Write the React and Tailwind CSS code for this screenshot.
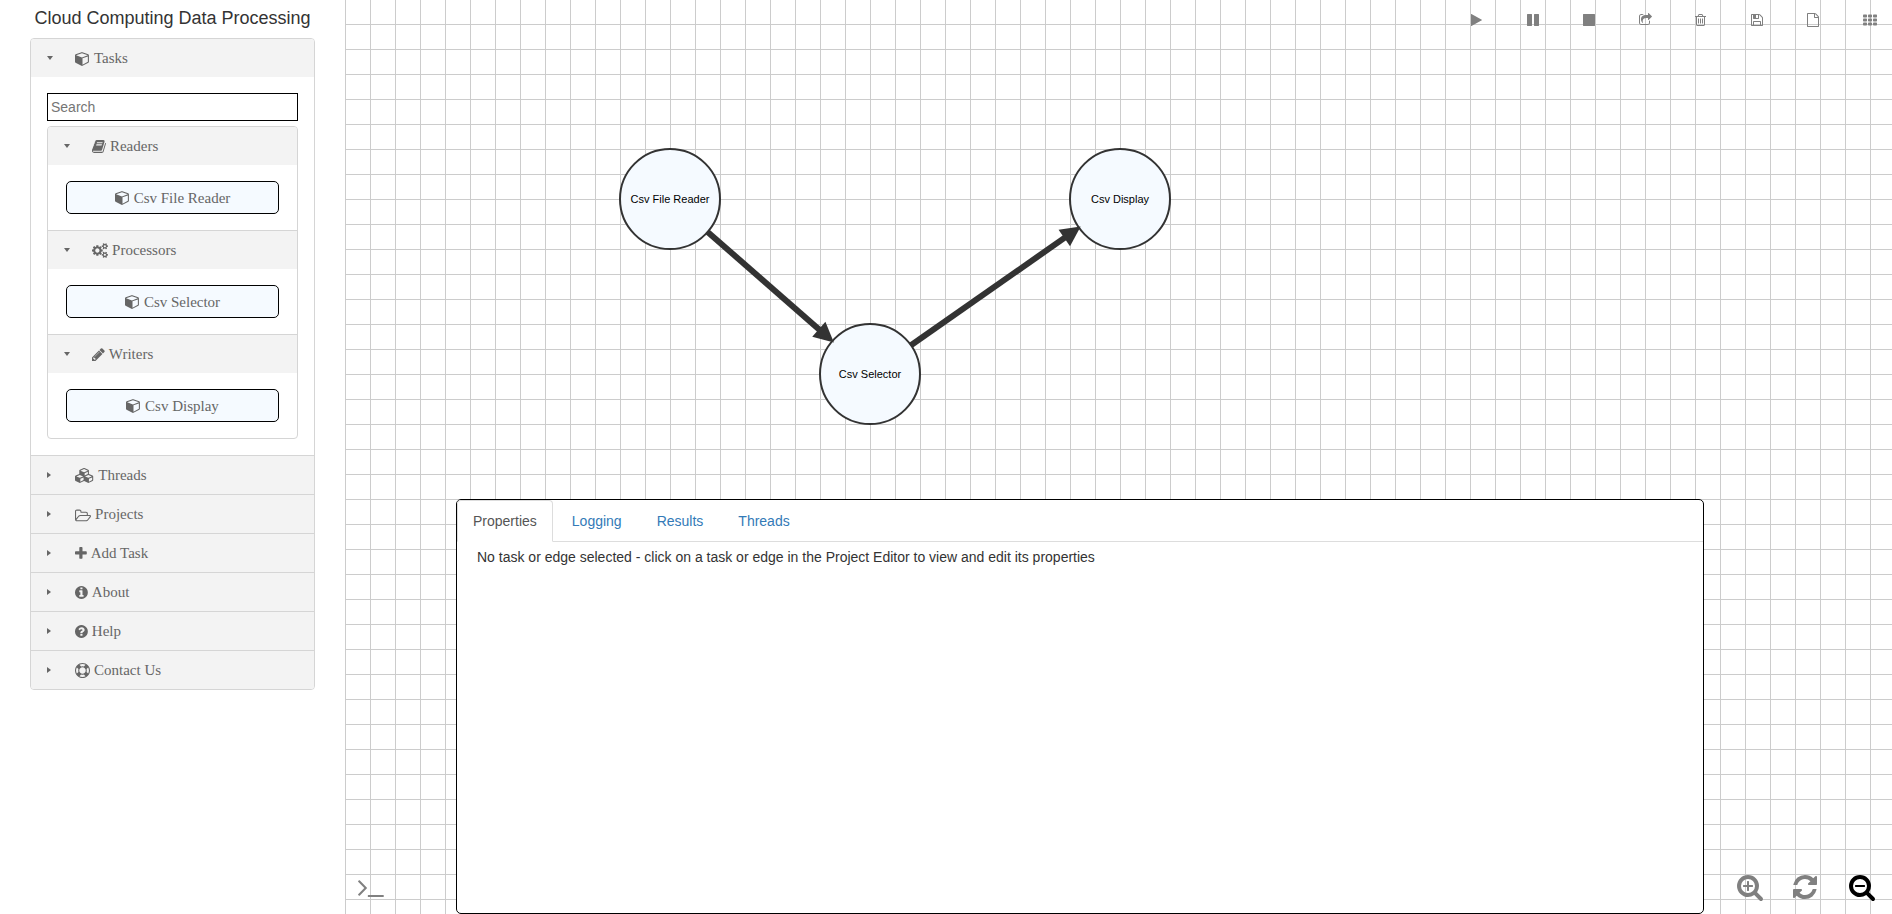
import { useState } from "react";

// Each glyph: [viewBox, path]
const GLYPHS = {
  cube: ["0 0 1792 1792", "M896 1629l640-349v-636l-640 233v752zm-64-865l698-254-698-254-698 254zm832-252v768q0 35-18 65t-49 47l-704 384q-28 16-61 16t-61-16l-704-384q-31-17-49-47t-18-65v-768q0-40 23-73t61-47l704-256q22-8 44-8t44 8l704 256q38 14 61 47t23 73z"],
  book: ["0 0 1664 1792", "M1639 478q40 57 18 129l-275 906q-19 64-76.5 107.5t-122.5 43.5h-923q-77 0-148.5-53.5t-99.5-131.5q-24-67-2-127 0-4 3-27t4-37q1-8-3-21.5t-3-19.5q2-11 8-21t16.5-23.5 16.5-23.5q23-38 45-91.5t30-91.5q3-10 .5-30t-.5-28q3-11 17-28t17-23q21-36 42-92t25-90q1-9-2.5-32t.5-28q4-13 22-30.5t22-22.5q19-26 42.5-84.5t27.5-96.5q1-8-3-25.5t-2-26.5q2-8 9-18t18-23 17-21q8-12 16.5-30.5t15-35 16-36 19.5-32 26.5-23.5 36-11.5 47.5 5.5l-1 3q38-9 51-9h761q74 0 114 56t18 130l-274 906q-36 119-71.5 153.5t-128.5 34.5h-869q-27 0-38 15-11 16-1 43 24 70 144 70h923q29 0 56-15.5t35-41.5l300-987q7-22 5-57 38 15 59 43zm-1064 2q-4 13 2 22.5t20 9.5h608q13 0 25.5-9.5t16.5-22.5l21-64q4-13-2-22.5t-20-9.5h-608q-13 0-25.5 9.5t-16.5 22.5zm-83 256q-4 13 2 22.5t20 9.5h608q13 0 25.5-9.5t16.5-22.5l21-64q4-13-2-22.5t-20-9.5h-608q-13 0-25.5 9.5t-16.5 22.5z"],
  cogs: ["-64 0 1920 1792", "M832 896q0-106-75-181t-181-75-181 75-75 181 75 181 181 75 181-75 75-181zm768 512q0-52-38-90t-90-38-90 38-38 90q0 53 37.5 90.5t90.5 37.5 90.5-37.5 37.5-90.5zm0-1024q0-52-38-90t-90-38-90 38-38 90q0 53 37.5 90.5t90.5 37.5 90.5-37.5 37.5-90.5zm-384 421v185q0 10-7 19.5t-16 10.5l-155 24q-11 35-32 76 34 48 90 115 7 11 7 20 0 12-7 19-23 30-82.5 89.5t-78.5 59.5q-11 0-21-7l-115-90q-37 19-77 31-11 108-23 155-7 24-30 24h-186q-11 0-20-7.5t-10-17.5l-23-153q-34-10-75-31l-118 89q-7 7-20 7-11 0-21-8-144-133-144-160 0-9 7-19 10-14 41-53t47-61q-23-44-35-82l-152-24q-10-1-17-9.5t-7-19.5v-185q0-10 7-19.5t16-10.5l155-24q11-35 32-76-34-48-90-115-7-11-7-20 0-12 7-20 22-30 82-89t79-59q11 0 21 7l115 90q34-18 77-32 11-108 23-154 7-24 30-24h186q11 0 20 7.5t10 17.5l23 153q34 10 75 31l118-89q8-7 20-7 11 0 21 8 144 133 144 160 0 8-7 19-12 16-42 54t-45 60q23 48 34 82l152 23q10 2 17 10.5t7 19.5zm640 533v140q0 16-149 31-12 27-30 52 51 113 51 138 0 4-4 7-122 71-124 71-8 0-46-47t-52-68q-20 2-30 2t-30-2q-14 21-52 68t-46 47q-2 0-124-71-4-3-4-7 0-25 51-138-18-25-30-52-149-15-149-31v-140q0-16 149-31 13-29 30-52-51-113-51-138 0-4 4-7 4-2 35-20t59-34 30-16q8 0 46 46.5t52 67.5q20-2 30-2t30 2q51-71 92-112l6-2q4 0 124 70 4 3 4 7 0 25-51 138 17 23 30 52 149 15 149 31zm0-1024v140q0 16-149 31-12 27-30 52 51 113 51 138 0 4-4 7-122 71-124 71-8 0-46-47t-52-68q-20 2-30 2t-30-2q-14 21-52 68t-46 47q-2 0-124-71-4-3-4-7 0-25 51-138-18-25-30-52-149-15-149-31v-140q0-16 149-31 13-29 30-52-51-113-51-138 0-4 4-7 4-2 35-20t59-34 30-16q8 0 46 46.5t52 67.5q20-2 30-2t30 2q51-71 92-112l6-2q4 0 124 70 4 3 4 7 0 25-51 138 17 23 30 52 149 15 149 31z"],
  pencil: ["128 0 1536 1792", "M491 1536l91-91-235-235-91 91v107h128v128h107zm523-928q0-22-22-22-10 0-17 7l-542 542q-7 7-7 17 0 22 22 22 10 0 17-7l542-542q7-7 7-17zm-54-192l416 416-832 832h-416v-416zm683 96q0 53-37 90l-166 166-416-416 166-165q36-38 90-38 53 0 91 38l235 234q37 39 37 91z"],
  cubes: ["-256 0 2304 1792", "M384 1629l384-192v-314l-384 164v342zm-64-454l404-173-404-173-404 173zm1088 454l384-192v-314l-384 164v342zm-64-454l404-173-404-173-404 173zm-448-293l384-165v-266l-384 164v267zm-64-379l441-189-441-189-441 189zm1088 518v416q0 36-19 67t-52 47l-448 224q-25 14-57 14t-57-14l-448-224q-5-2-7-4-2 2-7 4l-448 224q-25 14-57 14t-57-14l-448-224q-33-16-52-47t-19-67v-416q0-38 21.5-70t56.5-48l434-186v-400q0-38 21.5-70t56.5-48l448-192q23-10 50-10t50 10l448 192q35 16 56.5 48t21.5 70v400l434 186q36 16 57 48t21 70z"],
  folder: ["0 0 1920 1792", "M1781 1109q0-35-53-35h-1088q-40 0-85.5 21.5t-71.5 52.5l-294 363q-18 24-18 40 0 35 53 35h1088q40 0 86-22t71-53l294-363q18-22 18-39zm-1141-163h768v-160q0-40-28-68t-68-28h-576q-40 0-68-28t-28-68v-64q0-40-28-68t-68-28h-320q-40 0-68 28t-28 68v853l256-315q44-53 116-87.5t140-34.5zm1269 163q0 62-46 120l-295 363q-43 53-116 87.5t-140 34.5h-1088q-92 0-158-66t-66-158v-960q0-92 66-158t158-66h320q92 0 158 66t66 158v32h544q92 0 158 66t66 158v160h192q54 0 99 24.5t67 70.5q15 32 15 68z"],
  plus: ["192 0 1408 1792", "M1600 736v192q0 40-28 68t-68 28h-416v416q0 40-28 68t-68 28h-192q-40 0-68-28t-28-68v-416h-416q-40 0-68-28t-28-68v-192q0-40 28-68t68-28h416v-416q0-40 28-68t68-28h192q40 0 68 28t28 68v416h416q40 0 68 28t28 68z"],
  info: ["128 0 1536 1792", "M1152 1376v-160q0-14-9-23t-23-9h-96v-512q0-14-9-23t-23-9h-320q-14 0-23 9t-9 23v160q0 14 9 23t23 9h96v320h-96q-14 0-23 9t-9 23v160q0 14 9 23t23 9h448q14 0 23-9t9-23zm-128-896v-160q0-14-9-23t-23-9h-192q-14 0-23 9t-9 23v160q0 14 9 23t23 9h192q14 0 23-9t9-23zm640 416q0 209-103 385.5t-279.5 279.5-385.5 103-385.5-103-279.5-279.5-103-385.5 103-385.5 279.5-279.5 385.5-103 385.5 103 279.5 279.5 103 385.5z"],
  question: ["128 0 1536 1792", "M1024 1376v-192q0-14-9-23t-23-9h-192q-14 0-23 9t-9 23v192q0 14 9 23t23 9h192q14 0 23-9t9-23zm256-672q0-88-55.5-163t-138.5-116-170-41q-243 0-371 213-15 24 8 42l132 100q7 6 19 6 16 0 25-12 53-68 86-92 34-24 86-24 48 0 85.5 26t37.5 59q0 38-20 61t-68 45q-63 28-115.5 86.5t-52.5 125.5v36q0 14 9 23t23 9h192q14 0 23-9t9-23q0-19 21.5-49.5t54.5-49.5q32-18 49-28.5t46-35 44.5-48 28-60.5 12.5-81zm384 192q0 209-103 385.5t-279.5 279.5-385.5 103-385.5-103-279.5-279.5-103-385.5 103-385.5 279.5-279.5 385.5-103 385.5 103 279.5 279.5 103 385.5z"],
  ring: ["0 0 1792 1792", "M896 0q182 0 348 71t286 191 191 286 71 348-71 348-191 286-286 191-348 71-348-71-286-191-191-286-71-348 71-348 191-286 286-191 348-71zm0 128q-190 0-361 90l194 194q82-28 167-28t167 28l194-194q-171-90-361-90zm-678 1129l194-194q-28-82-28-167t28-167l-194-194q-90 171-90 361t90 361zm678 407q190 0 361-90l-194-194q-82 28-167 28t-167-28l-194 194q171 90 361 90zm0-384q159 0 271.5-112.5t112.5-271.5-112.5-271.5-271.5-112.5-271.5 112.5-112.5 271.5 112.5 271.5 271.5 112.5zm484-217l194 194q90-171 90-361t-90-361l-194 194q28 82 28 167t-28 167z"],
  play: ["192 0 1408 1792", "M1576 927l-1328 738q-23 13-39.5 3t-16.5-36v-1472q0-26 16.5-36t39.5 3l1328 738q23 13 23 31t-23 31z"],
  pause: ["128 0 1536 1792", "M1664 192v1408q0 26-19 45t-45 19h-512q-26 0-45-19t-19-45v-1408q0-26 19-45t45-19h512q26 0 45 19t19 45zm-896 0v1408q0 26-19 45t-45 19h-512q-26 0-45-19t-19-45v-1408q0-26 19-45t45-19h512q26 0 45 19t19 45z"],
  stop: ["128 0 1536 1792", "M1664 192v1408q0 26-19 45t-45 19h-1408q-26 0-45-19t-19-45v-1408q0-26 19-45t45-19h1408q26 0 45 19t19 45z"],
  share: ["64 0 1664 1792", "M1472 989v259q0 119-84.5 203.5t-203.5 84.5h-832q-119 0-203.5-84.5t-84.5-203.5v-832q0-119 84.5-203.5t203.5-84.5h255q13 0 22.5 9.5t9.5 22.5q0 27-26 32-77 26-133 60-10 4-16 4h-112q-66 0-113 47t-47 113v832q0 66 47 113t113 47h832q66 0 113-47t47-113v-214q0-19 18-29 28-13 54-37 16-16 35-8 21 9 21 29zm237-496l-384 384q-18 19-45 19-12 0-25-5-39-17-39-59v-192h-160q-323 0-438 131-119 137-74 473 3 23-20 34-8 2-12 2-16 0-26-13-10-14-21-31t-39.5-68.5-49.5-99.5-38.5-114-17.5-122q0-49 3.5-91t14-90 28-88 47-81.5 68.5-74 94.5-61.5 124.5-48.5 159.5-30.5 196.5-11h160v-192q0-42 39-59 13-5 25-5 26 0 45 19l384 384q19 19 19 45t-19 45z"],
  trash: ["192 0 1408 1792", "M704 736v576q0 14-9 23t-23 9h-64q-14 0-23-9t-9-23v-576q0-14 9-23t23-9h64q14 0 23 9t9 23zm256 0v576q0 14-9 23t-23 9h-64q-14 0-23-9t-9-23v-576q0-14 9-23t23-9h64q14 0 23 9t9 23zm256 0v576q0 14-9 23t-23 9h-64q-14 0-23-9t-9-23v-576q0-14 9-23t23-9h64q14 0 23 9t9 23zm128 724v-948h-896v948q0 22 7 40.5t14.5 27 10.5 8.5h832q3 0 10.5-8.5t14.5-27 7-40.5zm-672-1076h448l-48-117q-7-9-17-11h-317q-10 2-17 11zm928 32v64q0 14-9 23t-23 9h-96v948q0 83-47 143.5t-113 60.5h-832q-66 0-113-58.5t-47-141.5v-952h-96q-14 0-23-9t-9-23v-64q0-14 9-23t23-9h309l70-167q15-37 54-63t79-26h320q40 0 79 26t54 63l70 167h309q14 0 23 9t9 23z"],
  save: ["128 0 1536 1792", "M512 1536h768v-384h-768v384zm896 0h128v-896q0-14-10-38.5t-20-34.5l-281-281q-10-10-34-20t-39-10v416q0 40-28 68t-68 28h-576q-40 0-68-28t-28-68v-416h-128v1280h128v-416q0-40 28-68t68-28h832q40 0 68 28t28 68v416zm-384-928v-320q0-13-9.5-22.5t-22.5-9.5h-192q-13 0-22.5 9.5t-9.5 22.5v320q0 13 9.5 22.5t22.5 9.5h192q13 0 22.5-9.5t9.5-22.5zm640 32v928q0 40-28 68t-68 28h-1344q-40 0-68-28t-28-68v-1344q0-40 28-68t68-28h928q40 0 88 20t76 48l280 280q28 28 48 76t20 88z"],
  file: ["128 0 1536 1792", "M1596 380q28 28 48 76t20 88v1152q0 40-28 68t-68 28h-1344q-40 0-68-28t-28-68v-1600q0-40 28-68t68-28h896q40 0 88 20t76 48zm-444-244v376h376q-10-29-22-41l-313-313q-12-12-41-22zm384 1528v-1024h-416q-40 0-68-28t-28-68v-416h-768v1536h1280z"],
  zoomIn: ["64 0 1664 1792", "M1088 800v64q0 13-9.5 22.5t-22.5 9.5h-224v224q0 13-9.5 22.5t-22.5 9.5h-64q-13 0-22.5-9.5t-9.5-22.5v-224h-224q-13 0-22.5-9.5t-9.5-22.5v-64q0-13 9.5-22.5t22.5-9.5h224v-224q0-13 9.5-22.5t22.5-9.5h64q13 0 22.5 9.5t9.5 22.5v224h224q13 0 22.5 9.5t9.5 22.5zm128 32q0-185-131.5-316.5t-316.5-131.5-316.5 131.5-131.5 316.5 131.5 316.5 316.5 131.5 316.5-131.5 131.5-316.5zm512 832q0 53-37.5 90.5t-90.5 37.5q-54 0-90-38l-343-342q-179 124-399 124-143 0-273.5-55.5t-225-150-150-225-55.5-273.5 55.5-273.5 150-225 225-150 273.5-55.5 273.5 55.5 225 150 150 225 55.5 273.5q0 220-124 399l343 343q37 37 37 90z"],
  zoomOut: ["64 0 1664 1792", "M1088 800v64q0 13-9.5 22.5t-22.5 9.5h-576q-13 0-22.5-9.5t-9.5-22.5v-64q0-13 9.5-22.5t22.5-9.5h576q13 0 22.5 9.5t9.5 22.5zm128 32q0-185-131.5-316.5t-316.5-131.5-316.5 131.5-131.5 316.5 131.5 316.5 316.5 131.5 316.5-131.5 131.5-316.5zm512 832q0 53-37.5 90.5t-90.5 37.5q-54 0-90-38l-343-342q-179 124-399 124-143 0-273.5-55.5t-225-150-150-225-55.5-273.5 55.5-273.5 150-225 225-150 273.5-55.5 273.5 55.5 225 150 150 225 55.5 273.5q0 220-124 399l343 343q37 37 37 90z"],
  refresh: ["128 0 1536 1792", "M1639 1056q0 5-1 7-64 268-268 434.5t-478 166.5q-146 0-282.5-55t-243.5-157l-129 129q-19 19-45 19t-45-19-19-45v-448q0-26 19-45t45-19h448q26 0 45 19t19 45-19 45l-137 137q71 66 161 102t187 36q134 0 250-65t186-179q11-17 53-117 8-23 30-23h192q13 0 22.5 9.5t9.5 22.5zm25-800v448q0 26-19 45t-45 19h-448q-26 0-45-19t-19-45 19-45l138-138q-148-137-349-137-134 0-250 65t-186 179q-11 17-53 117-8 23-30 23h-199q-13 0-22.5-9.5t-9.5-22.5v-7q65-268 270-434.5t480-166.5q146 0 284 55.5t245 156.5l130-129q19-19 45-19t45 19 19 45z"],
  terminal: ["77 0 1651 1792", "M649 983l-466 466q-10 10-23 10t-23-10l-50-50q-10-10-10-23t10-23l393-393-393-393q-10-10-10-23t10-23l50-50q10-10 23-10t23 10l466 466q10 10 10 23t-10 23zm1079 457v64q0 14-9 23t-23 9h-960q-14 0-23-9t-9-23v-64q0-14 9-23t23-9h960q14 0 23 9t9 23z"],
};

const CELLS = [0, 640, 1280];
const CELL_ROWS = [192, 704, 1216];

function Icon({ name, className }) {
  if (name === "grid") {
    return (
      <svg viewBox="0 0 1792 1792" className={className} fill="currentColor" aria-hidden="true">
        {CELL_ROWS.map((y) => CELLS.map((x) => (
          <rect key={`${x}-${y}`} x={x} y={y} width="512" height="384" rx="96" />
        )))}
      </svg>
    );
  }
  const [viewBox, d] = GLYPHS[name];
  return (
    <svg viewBox={viewBox} className={className} fill="currentColor" aria-hidden="true">
      <path d={d} />
    </svg>
  );
}

function SectionHeader({ icon, label, open, onClick }) {
  return (
    <button
      type="button"
      aria-expanded={open}
      onClick={onClick}
      className="flex h-[38px] w-full cursor-pointer items-center bg-[#f3f3f3] pl-4 text-left"
    >
      <span className="flex w-7 shrink-0">
        {open ? (
          <svg viewBox="0 0 6 4" className="h-1 w-1.5" fill="currentColor" aria-hidden="true"><path d="M0 0h6L3 4z" /></svg>
        ) : (
          <svg viewBox="0 0 4 6" className="h-1.5 w-1" fill="currentColor" aria-hidden="true"><path d="M0 0v6l4-3z" /></svg>
        )}
      </span>
      <Icon name={icon} className="h-[15px] w-auto shrink-0" />
      <span className="ml-1">{label}</span>
    </button>
  );
}

const GROUPS = [
  { icon: "book", label: "Readers", tasks: ["Csv File Reader"] },
  { icon: "cogs", label: "Processors", tasks: ["Csv Selector"] },
  { icon: "pencil", label: "Writers", tasks: ["Csv Display"] },
];

const SECTIONS = [
  { icon: "cubes", label: "Threads" },
  { icon: "folder", label: "Projects" },
  { icon: "plus", label: "Add Task" },
  { icon: "info", label: "About" },
  { icon: "question", label: "Help" },
  { icon: "ring", label: "Contact Us" },
];

function Sidebar() {
  const [query, setQuery] = useState("");
  const [tasksOpen, setTasksOpen] = useState(true);
  const [closed, setClosed] = useState([]);
  const toggle = (label) =>
    setClosed((c) => (c.includes(label) ? c.filter((l) => l !== label) : [...c, label]));

  return (
    <aside className="w-[345px] shrink-0 px-[30px]">
      <h1 className="flex h-[38px] items-center justify-center pb-0.5 whitespace-nowrap text-lg text-[#333]">
        Cloud Computing Data Processing
      </h1>
      <div className="overflow-hidden rounded border border-[#d5d5d5] font-['Liberation_Serif',serif] text-[15px] leading-5 text-[#666]">
        <SectionHeader icon="cube" label="Tasks" open={tasksOpen} onClick={() => setTasksOpen(!tasksOpen)} />
        {tasksOpen && (
          <div className="p-4">
            <input
              type="text"
              aria-label="Search tasks"
              placeholder="Search"
              value={query}
              onChange={(e) => setQuery(e.target.value)}
              className="mb-[5px] block h-7 w-full border border-black bg-white px-[3px] font-['Liberation_Sans',sans-serif] text-sm placeholder:text-[#757575]"
            />
            <div className="divide-y divide-[#d5d5d5] overflow-hidden rounded border border-[#d5d5d5]">
              {GROUPS.map((g) => (
                <section key={g.label}>
                  <SectionHeader icon={g.icon} label={g.label} open={!closed.includes(g.label)} onClick={() => toggle(g.label)} />
                  {!closed.includes(g.label) && (
                    <div className="px-[18px] py-4">
                      {g.tasks
                        .filter((t) => t.toLowerCase().includes(query.toLowerCase()))
                        .map((t) => (
                          <button key={t} type="button" className="flex h-[33px] w-full cursor-pointer items-center justify-center gap-1 rounded-[5px] border border-black bg-[#f5faff]">
                            <Icon name="cube" className="h-[15px] w-auto" />
                            {t}
                          </button>
                        ))}
                    </div>
                  )}
                </section>
              ))}
            </div>
          </div>
        )}
        {SECTIONS.map((s) => (
          <div key={s.label} className="border-t border-[#d5d5d5]">
            <SectionHeader icon={s.icon} label={s.label} open={false} />
          </div>
        ))}
      </div>
    </aside>
  );
}

const NODES = [
  { id: "reader", label: "Csv File Reader", x: 325, y: 199 },
  { id: "selector", label: "Csv Selector", x: 525, y: 374 },
  { id: "display", label: "Csv Display", x: 775, y: 199 },
];
const EDGES = [["reader", "selector"], ["selector", "display"]];
const RADIUS = 50;

function Edge({ from, to }) {
  const length = Math.hypot(to.x - from.x, to.y - from.y);
  const angle = (Math.atan2(to.y - from.y, to.x - from.x) * 180) / Math.PI;
  const tip = length - RADIUS + 2;
  return (
    <g transform={`translate(${from.x} ${from.y}) rotate(${angle})`} fill="#333">
      <rect x={RADIUS} y="-3" width={tip - RADIUS - 12} height="6" />
      <path d={`M${tip} 0l-20 -10v20z`} />
    </g>
  );
}

function Diagram() {
  const byId = Object.fromEntries(NODES.map((n) => [n.id, n]));
  return (
    <svg className="absolute inset-0 h-full w-full" role="img" aria-label="Project graph">
      {NODES.map((n) => (
        <g key={n.id}>
          <circle cx={n.x} cy={n.y} r={RADIUS} fill="#f5faff" stroke="#333" strokeWidth="2" />
          <text x={n.x} y={n.y + 4} textAnchor="middle" className="text-[11px]">{n.label}</text>
        </g>
      ))}
      {EDGES.map(([a, b]) => <Edge key={a + b} from={byId[a]} to={byId[b]} />)}
    </svg>
  );
}

const TOOLS = [
  ["play", "Run"],
  ["pause", "Pause"],
  ["stop", "Stop"],
  ["share", "Share"],
  ["trash", "Delete"],
  ["save", "Save"],
  ["file", "New project"],
  ["grid", "Toggle grid"],
];

const TABS = ["Properties", "Logging", "Results", "Threads"];

function PropertiesPanel() {
  const [active, setActive] = useState("Properties");
  return (
    <section className="relative ml-[111px] mr-[188px] h-[415px] rounded-[5px] border border-black bg-white text-sm leading-5">
      <div role="tablist" className="flex gap-[3px] border-b border-[#ddd]">
        {TABS.map((t) => (
          <button
            key={t}
            type="button"
            role="tab"
            aria-selected={t === active}
            onClick={() => setActive(t)}
            className={
              t === active
                ? "-mb-px cursor-pointer rounded-t border border-[#ddd] border-b-white bg-white px-[15px] py-2.5 text-[#555]"
                : "-mb-px cursor-pointer rounded-t border border-transparent px-[15px] py-2.5 text-[#337ab7]"
            }
          >
            {t}
          </button>
        ))}
      </div>
      <p role="tabpanel" className="px-5 pt-[5px] text-[#333]">
        No task or edge selected - click on a task or edge in the Project Editor to view and edit its properties
      </p>
    </section>
  );
}

export default function App() {
  return (
    <div className="flex min-h-screen bg-white font-['Liberation_Sans',Arial,sans-serif]">
      <Sidebar />
      <main className="relative flex min-w-0 flex-1 flex-col justify-between bg-[linear-gradient(to_right,#ccc_1px,transparent_1px),linear-gradient(to_bottom,#ccc_1px,transparent_1px)] bg-[size:25px_25px] bg-[position:0_-1px]">
        <Diagram />
        <div className="relative flex justify-end gap-[42px] pt-[13px] pr-[15px] text-[#808080]">
          {TOOLS.map(([icon, label]) => (
            <button key={icon} type="button" aria-label={label} className="flex w-3.5 cursor-pointer">
              <Icon name={icon} className="h-3.5 w-auto" />
            </button>
          ))}
        </div>
        <PropertiesPanel />
        <button type="button" aria-label="Open console" className="absolute bottom-[13px] left-[13px] flex cursor-pointer text-[#808080]">
          <Icon name="terminal" className="h-7 w-auto" />
        </button>
        <div className="absolute right-[15px] bottom-[13px] flex gap-7 text-[#808080]">
          <button type="button" aria-label="Zoom in" className="flex w-7 cursor-pointer"><Icon name="zoomIn" className="h-7 w-auto" /></button>
          <button type="button" aria-label="Reset view" className="flex w-7 cursor-pointer"><Icon name="refresh" className="h-7 w-auto" /></button>
          <button type="button" aria-label="Zoom out" className="flex w-7 cursor-pointer text-black"><Icon name="zoomOut" className="h-7 w-auto" /></button>
        </div>
      </main>
    </div>
  );
}
